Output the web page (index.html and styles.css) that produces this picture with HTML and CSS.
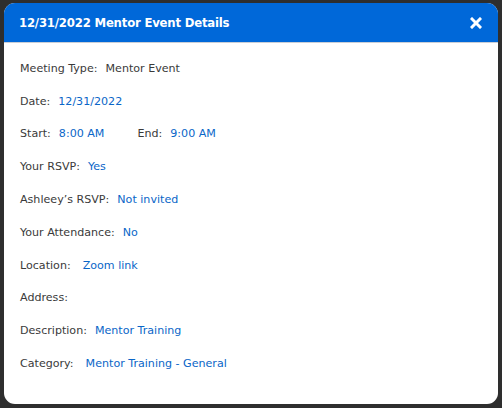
FILE: index.html
```html
<!DOCTYPE html>
<html>
<head>
<meta charset="utf-8">
<link rel="stylesheet" href="styles.css">
</head>
<body>
<div class="modal">
  <div class="header">
    <div class="title">12/31/2022 Mentor Event Details</div>
    <svg class="close" width="12" height="12" viewBox="0 0 12 12"><path d="M2 2L10 10M10 2L2 10" stroke="#fff" stroke-width="3" stroke-linecap="square"/></svg>
  </div>
  <div class="body">
    <div class="row"><span class="label">Meeting Type:</span><span class="val plain">Mentor Event</span></div>
    <div class="row"><span class="label">Date:</span><span class="val">12/31/2022</span></div>
    <div class="row"><span class="label">Start:</span><span class="val">8:00 AM</span><span class="label second">End:</span><span class="val">9:00 AM</span></div>
    <div class="row"><span class="label">Your RSVP:</span><span class="val">Yes</span></div>
    <div class="row"><span class="label">Ashleey’s RSVP:</span><span class="val">Not invited</span></div>
    <div class="row"><span class="label">Your Attendance:</span><span class="val">No</span></div>
    <div class="row"><span class="label">Location:</span><span class="val wide">Zoom link</span></div>
    <div class="row"><span class="label">Address:</span></div>
    <div class="row"><span class="label">Description:</span><span class="val">Mentor Training</span></div>
    <div class="row"><span class="label">Category:</span><span class="val wide">Mentor Training - General</span></div>
  </div>
</div>
</body>
</html>
```
FILE: styles.css
```css
html, body {
  margin: 0;
  padding: 0;
}
body {
  background: #2e2e2e;
  width: 502px;
  height: 408px;
  padding: 3px 4px 4px 4px;
  box-sizing: border-box;
  font-family: "DejaVu Sans", sans-serif;
}
.modal {
  background: #fff;
  border-radius: 11px;
  overflow: hidden;
  height: 401px;
}
.header {
  background: #0068d9;
  height: 39px;
  border-bottom: 1px solid #c9ced6;
  display: flex;
  align-items: center;
  justify-content: space-between;
  padding: 0 16px 0 15px;
}
.title {
  color: #fff;
  font-weight: bold;
  font-size: 11.7px;
  letter-spacing: -0.2px;
}
.close {
  display: block;
}
.body {
  padding: 9px 16px 0 16px;
}
.row {
  height: 32.8px;
  display: flex;
  align-items: center;
  font-size: 11.1px;
  color: #3a3a3a;
}
.val {
  color: #0a66c8;
  margin-left: 8px;
}
.val.plain {
  color: #3a3a3a;
}
.val.wide {
  margin-left: 12px;
}
.second {
  margin-left: 33px;
}
```
